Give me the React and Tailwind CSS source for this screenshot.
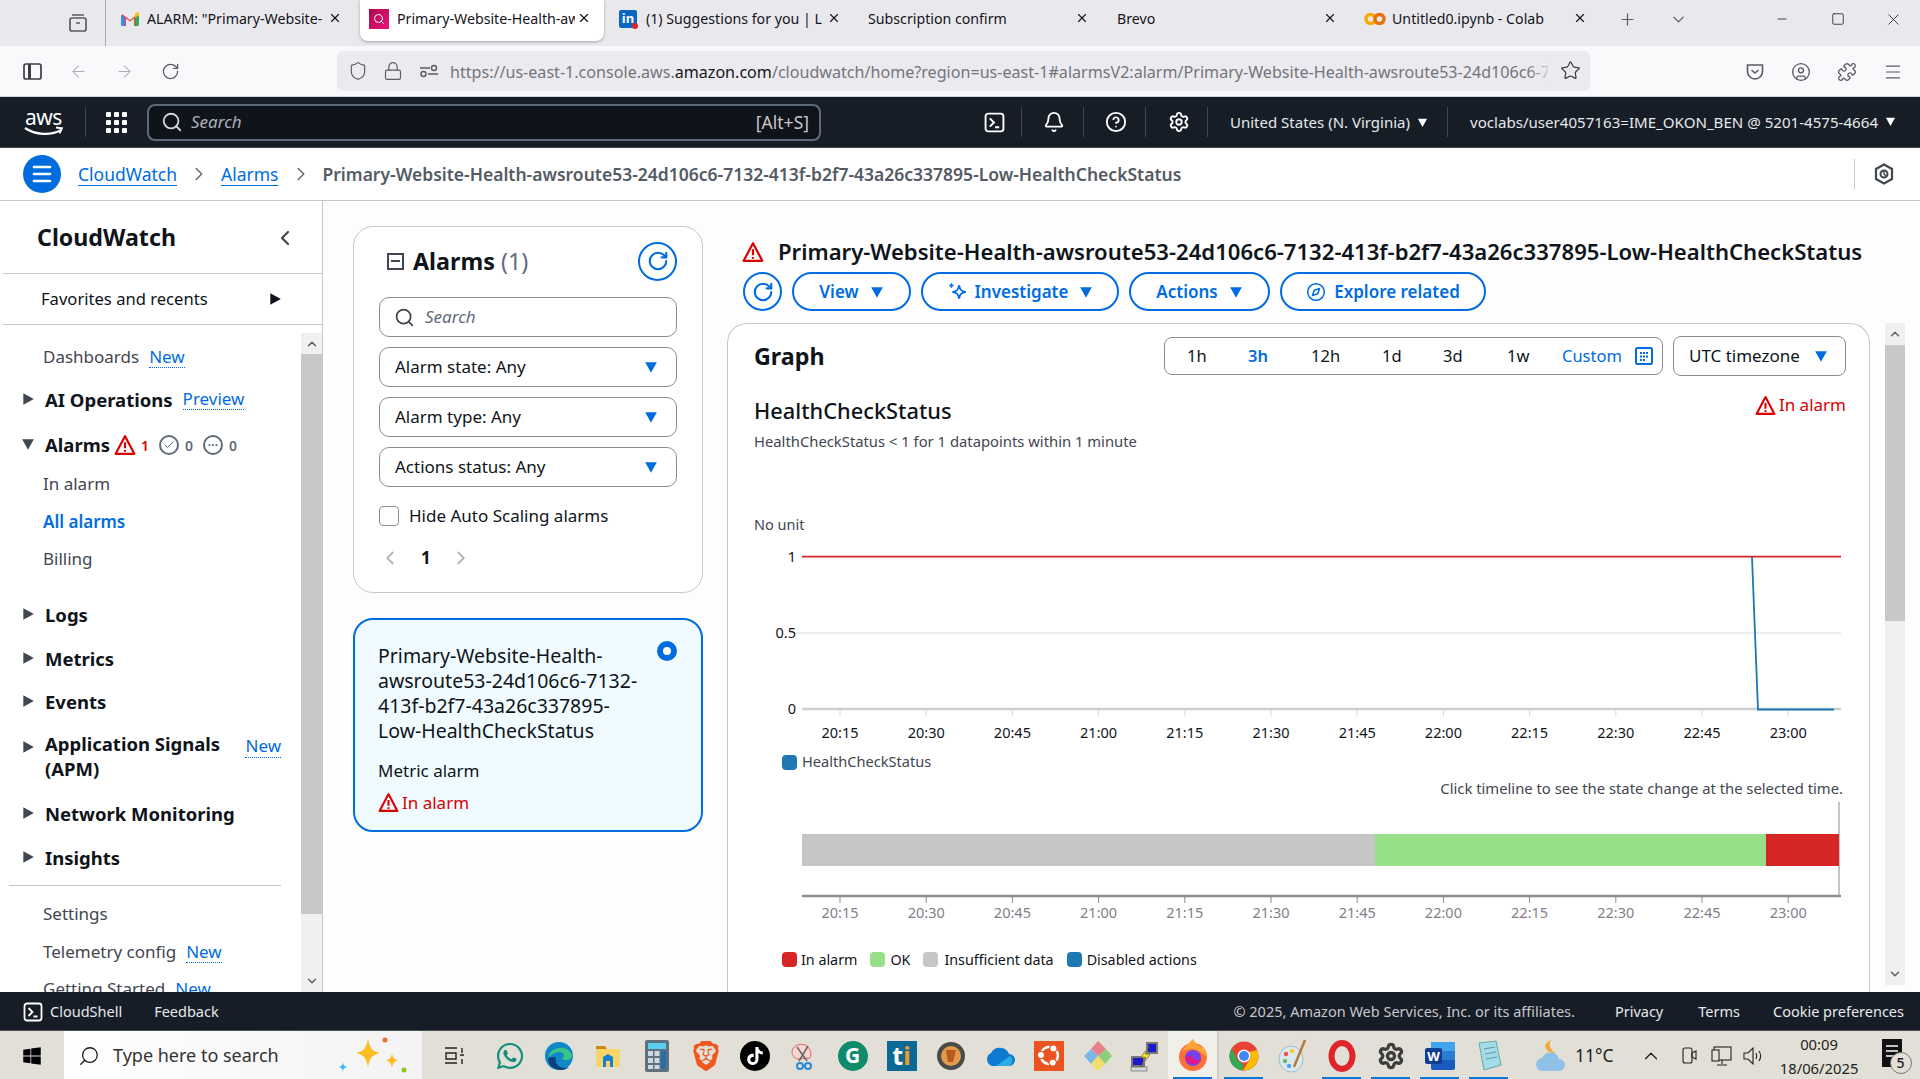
import React from "react";
import {
  ArrowLeft, ArrowRight, RotateCw, Shield, Lock, Star, CircleUser, Puzzle, Menu, Search, Bell, CircleHelp, Settings,
  Compass, ChevronRight, ChevronLeft, ChevronUp, ChevronDown, X, Plus, Minus, Square, Check, Ellipsis,
} from "lucide-react";
import { FaWhatsapp, FaWindows } from "react-icons/fa";
import { SiTiktok, SiBrave, SiUbuntu } from "react-icons/si";

const font = { fontFamily: '"Noto Sans", sans-serif' };

const Caret = ({ dir = "down", className = "", size = 12 }) => (
  <svg width={size} height={size} viewBox="0 0 12 12" className={`shrink-0 ${className}`} fill="currentColor">
    {dir === "down" ? <path d="M1 2h10L6 11z" /> : <path d="M2 1l9 5-9 5z" />}
  </svg>
);

const Warn = ({ size = 20, className = "" }) => (
  <svg width={size} height={size} viewBox="0 0 20 20" className={`shrink-0 ${className}`} fill="none" stroke="#db0000" strokeWidth="2" strokeLinejoin="round">
    <path d="M10 2 1.500 18h17z" />
    <path d="M10 7.500v5.500M10 14.500v1.600" strokeWidth="2" />
  </svg>
);

const Term = ({ size = 20, className = "" }) => (
  <svg width={size} height={size} viewBox="0 0 20 20" className={`shrink-0 ${className}`} fill="none" stroke="currentColor" strokeWidth="1.8">
    <rect x="1.500" y="1.500" width="17" height="17" rx="2.500" />
    <path d="M5.500 6l4 4-4 4M10.500 14.500h4" />
  </svg>
);

function Tab({ w, icon, iconW = 37, text, active, textW, close = 13 }) {
  return (
    <div className={`h-[41px] flex items-center relative shrink-0 pb-[4px] ${active ? "bg-white rounded-b-lg shadow-[0_1px_3px_rgba(0,0,0,0.3)]" : ""}`} style={{ width: w }}>
      <div className="flex justify-center shrink-0" style={{ width: iconW }}>{icon}</div>
      <span className="overflow-hidden whitespace-nowrap text-[14.2px] text-[#15141a]" style={{ width: textW }}>{text}</span>
      <X size={14} strokeWidth={2} className="absolute top-[11px] text-[#15141a]" style={{ right: close }} />
    </div>
  );
}

function TabBar() {
  return (
    <div className="h-[46px] bg-[#e9e9ed] flex items-start shrink-0">
      <div className="w-[106px] h-[46px] flex items-center border-r border-[#a8a8ad] shrink-0 pl-[68px]">
        <svg width="20" height="20" viewBox="0 0 20 20" fill="none" stroke="#5b5b66" strokeWidth="1.7"><rect x="2" y="5" width="16" height="13" rx="2"/><path d="M4 2h12M8 10h4"/></svg>
      </div>
      <Tab w={254} iconW={41} close={18} textW={176} text={'ALARM: "Primary-Website-Health'} icon={
        <svg width="18" height="14" viewBox="0 0 18 14" className="ml-[6px]"><path d="M1 14V2l8 6 8-6v12h-4V6.500L9 9.500 5 6.500V14z" fill="#ea4335"/><path d="M0 3v9.500A1.500 1.500 0 0 0 1.500 14H4V6z" fill="#4285f4"/><path d="M18 3v9.500a1.500 1.500 0 0 1-1.500 1.500H14V6z" fill="#34a853"/><path d="M14 2v4l4-3V1.500C18 .5 17 0 16 .5z" fill="#fbbc04"/></svg>
      } />
      <Tab w={244} textW={178} active text="Primary-Website-Health-awsroute53" icon={
        <div className="w-[20px] h-[20px] bg-gradient-to-br from-[#b0084d] to-[#e7157b] flex items-center justify-center">
          <Search size={12} className="text-white" />
        </div>
      } />
      <Tab w={248} iconW={42} close={11} textW={176} text="(1) Suggestions for you | LinkedIn" icon={
        <div className="relative w-[18px] h-[18px] bg-[#0a66c2] text-white text-[13px] font-bold flex items-center justify-center rounded-[2px] ml-[6px]">in<span className="absolute -right-[1px] -bottom-[1px] w-[6px] h-[6px] rounded-full bg-[#e0232c]" /></div>
      } />
      <div className="w-[248px] h-[41px] pb-[4px] flex items-center relative shrink-0 text-[14.2px] text-[#15141a] pl-[16px]">Subscription confirm<X size={14} strokeWidth={2} className="absolute right-[11px] top-[11px]" /></div>
      <div className="w-[249px] h-[41px] pb-[4px] flex items-center relative shrink-0 text-[14.2px] text-[#15141a] pl-[17px]">Brevo<X size={14} strokeWidth={2} className="absolute right-[12px] top-[11px]" /></div>
      <div className="w-[249px] h-[41px] pb-[4px] flex items-center relative shrink-0 text-[14.2px] text-[#15141a] pl-[15px]">
        <svg width="22" height="12" viewBox="0 0 22 12" fill="none" strokeWidth="3.400" className="mr-[6px]"><circle cx="6.500" cy="6" r="4.500" stroke="#f9ab00"/><circle cx="15.500" cy="6" r="4.500" stroke="#e8710a"/></svg>
        Untitled0.ipynb - Colab<X size={14} strokeWidth={2} className="absolute right-[11px] top-[11px]" />
      </div>
      <div className="flex items-center h-[38px] ml-[20px] gap-[32px] text-[#5b5b66]">
        <Plus size={19} strokeWidth={1.500} />
        <ChevronDown size={19} strokeWidth={1.500} />
      </div>
      <div className="flex items-center h-[38px] ml-auto text-[#15141a] pr-[-2px]">
        <div className="w-[57px] flex justify-center"><Minus size={14} strokeWidth={1.300} /></div>
        <div className="w-[56px] flex justify-center"><Square size={14} strokeWidth={1.300} /></div>
        <div className="w-[54px] flex justify-center"><X size={19} strokeWidth={1} /></div>
      </div>
    </div>
  );
}

function Toolbar() {
  return (
    <div className="h-[51px] bg-[#f9f9fb] flex items-center shrink-0 border-b border-[#d5d5da] text-[#5b5b66]">
      <div className="w-[337px] flex items-center pl-[23px] gap-[27px]">
        <svg width="19" height="17" viewBox="0 0 19 17" fill="none" stroke="#3e3e46" strokeWidth="1.700"><rect x="1" y="1" width="17" height="15" rx="2"/><path d="M6.500 1v15" strokeWidth="3" /></svg>
        <ArrowLeft size={19} strokeWidth={1.300} className="text-[#adadb3]" />
        <ArrowRight size={19} strokeWidth={1.300} className="text-[#adadb3]" />
        <RotateCw size={19} strokeWidth={1.600} />
      </div>
      <div className="w-[1253px] h-[40px] bg-[#ebebef] rounded-[6px] flex items-center pl-[11px] relative overflow-hidden">
        <Shield size={20} strokeWidth={1.400} className="shrink-0" />
        <Lock size={20} strokeWidth={1.400} className="shrink-0 ml-[15px]" />
        <svg width="20" height="16" viewBox="0 0 20 16" className="shrink-0 ml-[16px]" fill="none" stroke="currentColor" strokeWidth="1.400"><path d="M1 5h10M9 11h10"/><circle cx="15" cy="5" r="2.500"/><circle cx="4.500" cy="11" r="2.500"/></svg>
        <div className="ml-[11px] w-[1098px] h-[26px] leading-[26px] mt-[2px] overflow-hidden whitespace-nowrap text-[16.1px] text-[#74747b]">
          https://us-east-1.console.aws.<span className="text-[#15141a]">amazon.com</span>/cloudwatch/home?region=us-east-1#alarmsV2:alarm/Primary-Website-Health-awsroute53-24d106c6-7132
        </div>
        <div className="absolute left-[1190px] top-0 w-[28px] h-[40px] bg-gradient-to-r from-transparent to-[#ebebef]" />
        <Star size={21} strokeWidth={1.400} className="absolute right-[9px] top-[9px] text-[#3e3e46]" />
      </div>
      <div className="flex-1 flex items-center justify-end pr-[17px] gap-[26px] mt-[1px]">
        <svg width="20" height="20" viewBox="0 0 20 20" className="ml-[3px]" fill="none" stroke="currentColor" strokeWidth="1.600"><path d="M2.500 3h15v6.500a7.500 7.500 0 0 1-15 0z"/><path d="M6.500 8l3.500 3 3.500-3"/></svg>
        <CircleUser size={20} strokeWidth={1.600} />
        <Puzzle size={20} strokeWidth={1.600} />
        <Menu size={20} strokeWidth={1.400} />
      </div>
    </div>
  );
}

const NavSep = () => <div className="w-px h-[30px] bg-[#414750] shrink-0" />;

function AwsNav() {
  return (
    <div className="h-[51px] bg-[#161d26] flex items-center shrink-0 text-[#e6e9ec] relative border-b border-[#414750]">
      <div className="w-[85px] flex justify-center pl-[2px] shrink-0">
        <div className="relative w-[40px] h-[30px] flex justify-center">
          <span className="text-white text-[21px] leading-[20px] tracking-[-0.5px]">aws</span>
          <svg width="40" height="11" viewBox="0 0 40 11" className="absolute left-0 bottom-0" fill="none"><path d="M1 2c10 7 26 8 36 2" stroke="#fff" strokeWidth="2.200"/><path d="M32 1.500l6 .8-2.400 5" stroke="#fff" strokeWidth="1.800"/></svg>
        </div>
      </div>
      <div className="w-px h-[30px] bg-[#414750]" />
      <div className="w-[60px] flex justify-center shrink-0">
        <div className="grid grid-cols-3 gap-[3px]">
          {Array.from({ length: 9 }).map((_, i) => <span key={i} className="w-[5px] h-[5px] rounded-[1px] bg-white" />)}
        </div>
      </div>
      <div className="w-[674px] h-[37px] ml-[1px] border-2 border-[#5f6b7a] rounded-[8px] bg-[#0f141a] flex items-center pl-[12px] pr-[10px] shrink-0">
        <Search size={22} strokeWidth={2} className="text-[#d1d5db]" />
        <span className="italic text-[#aab0b8] text-[17px] ml-[8px]">Search</span>
        <span className="ml-auto text-[#c6c6cd] text-[17.5px]">[Alt+S]</span>
      </div>
      <div className="flex-1 flex items-center">
        <div className="w-[174px] shrink-0 relative h-[30px] flex items-center ml-[-1px]">
          <Term size={21} className="absolute left-[164px] text-white" />
        </div>
        <div className="ml-[27px] flex items-center">
          <NavSep />
          <div className="w-[61px] flex justify-center pl-[2px]"><Bell size={22} strokeWidth={2} className="text-white" /></div>
          <NavSep />
          <div className="w-[61px] flex justify-center pl-[2px]"><CircleHelp size={22} strokeWidth={2} className="text-white" /></div>
          <NavSep />
          <div className="w-[61px] flex justify-center pl-[4px]"><Settings size={22} strokeWidth={2} className="text-white" /></div>
          <NavSep />
          <div className="w-[239px] flex items-center pl-[22px] text-[15px] whitespace-nowrap">United States (N. Virginia)<Caret size={11} className="ml-[7px] text-white" /></div>
          <NavSep />
          <div className="flex items-center pl-[22px] text-[15.100px] whitespace-nowrap">voclabs/user4057163=IME_OKON_BEN @ 5201-4575-4664<Caret size={11} className="ml-[7px] text-white" /></div>
        </div>
      </div>
    </div>
  );
}

function Breadcrumb() {
  return (
    <div className="h-[53px] bg-white border-b border-[#c6c6cd] flex items-center shrink-0 pl-[23px] text-[17.500px]">
      <div className="w-[38px] h-[38px] rounded-full bg-[#006ce0] flex items-center justify-center shrink-0">
        <Menu size={24} strokeWidth={2.600} className="text-white" />
      </div>
      <a className="ml-[17px] text-[#006ce0] underline underline-offset-[4px]">CloudWatch</a>
      <ChevronRight size={22} strokeWidth={1.600} className="mx-[11px] text-[#656871]" />
      <a className="text-[#006ce0] underline underline-offset-[4px]">Alarms</a>
      <ChevronRight size={22} strokeWidth={1.600} className="mx-[11px] text-[#656871]" />
      <span className="font-semibold text-[#545b64] whitespace-nowrap">Primary-Website-Health-awsroute53-24d106c6-7132-413f-b2f7-43a26c337895-Low-HealthCheckStatus</span>
      <div className="ml-auto w-[65px] h-[30px] border-l border-[#c6c6cd] flex items-center pl-[19px] mr-[1px]">
        <svg width="20" height="22" viewBox="0 0 20 22" fill="none" stroke="#414750" strokeWidth="2.200"><path d="M10 1.500 18 6v10l-8 4.500L2 16V6z"/><circle cx="10" cy="11" r="3.500" strokeWidth="2"/><path d="M10 8v3l2 2" strokeWidth="1.400"/></svg>
      </div>
    </div>
  );
}

const NewTag = ({ children = "New", className = "" }) => (
  <span className={`text-[#006ce0] border-b border-dotted border-[#006ce0] leading-[21px] text-[17px] ${className}`}>{children}</span>
);

const Group = ({ label, mt, h = "h-[36px]", extra }) => (
  <div className={`flex items-center ${h} ${mt} relative pl-[45px] pr-[2px]`}>
    <Caret dir="right" size={14} className="absolute left-[21px] top-[11px] text-[#414750]" />
    <span className="font-bold text-[18.500px] leading-[25px] text-[#0f141a] whitespace-nowrap">{label}</span>
    {extra}
  </div>
);

const Item = ({ label, mt, color = "text-[#424650]", tag, bold }) => (
  <div className={`flex items-center h-[36px] ${mt} pl-[43px] text-[17px] ${color} ${bold ? "font-semibold" : ""} whitespace-nowrap`}>
    {label}{tag && <NewTag className="ml-[10px]">{tag}</NewTag>}
  </div>
);

function Sidebar() {
  return (
    <div className="w-[323px] bg-white border-r border-[#c6c6cd] shrink-0 flex flex-col h-[791px] overflow-hidden">
      <div className="h-[73px] border-b border-[#c6c6cd] ml-[3px] flex items-center relative shrink-0">
        <span className="ml-[34px] text-[23.200px] font-bold text-[#0f141a]">CloudWatch</span>
        <ChevronLeft size={24} strokeWidth={2.200} className="absolute left-[270px] top-[25px] text-[#424650]" />
      </div>
      <div className="h-[51px] border-b border-[#c6c6cd] ml-[3px] flex items-center relative shrink-0">
        <span className="ml-[38px] text-[16.600px] text-[#0f141a]">Favorites and recents</span>
        <Caret dir="right" size={14} className="absolute left-[265px] top-[18px] text-[#0f141a]" />
      </div>
      <div className="flex flex-1 overflow-hidden">
        <div className="w-[301px] overflow-hidden shrink-0">
          <Item label="Dashboards" mt="mt-[14px]" tag="New" />
          <Group label="AI Operations" mt="mt-[6px]" extra={<NewTag className="ml-[10px]">Preview</NewTag>} />
          <div className="flex items-center h-[36px] mt-[10px] relative pl-[45px]">
            <Caret dir="down" size={14} className="absolute left-[21px] top-[10px] text-[#414750]" />
            <span className="font-bold text-[18.500px] text-[#0f141a]">Alarms</span>
            <Warn size={22} className="ml-[4px]" />
            <span className="ml-[5px] text-[14px] font-semibold text-[#db0000]">1</span>
            <span className="ml-[10px] w-[20px] h-[20px] rounded-full border-2 border-[#5f6b7a] flex items-center justify-center"><Check size={12} strokeWidth={2} className="text-[#5f6b7a]" /></span>
            <span className="ml-[6px] text-[14px] font-semibold text-[#5f6b7a]">0</span>
            <span className="ml-[10px] w-[20px] h-[20px] rounded-full border-2 border-[#5f6b7a] flex items-center justify-center"><Ellipsis size={12} strokeWidth={2.500} className="text-[#5f6b7a]" /></span>
            <span className="ml-[6px] text-[14px] font-semibold text-[#5f6b7a]">0</span>
          </div>
          <Item label="In alarm" mt="mt-[3px]" />
          <Item label="All alarms" mt="mt-[2px]" color="text-[#006ce0]" bold />
          <Item label="Billing" mt="mt-[1px]" />
          <Group label="Logs" mt="mt-[19px]" />
          <Group label="Metrics" mt="mt-[8px]" />
          <Group label="Events" mt="mt-[7px]" />
          <div className="flex h-[58px] mt-[12px] relative pl-[45px] pr-[20px]">
            <Caret dir="right" size={14} className="absolute left-[21px] top-[9px] text-[#414750]" />
            <span className="font-bold text-[18.500px] leading-[25px] text-[#0f141a] w-[200px]">Application Signals (APM)</span>
            <div className="ml-auto h-[24px] mt-[3px]"><NewTag>New</NewTag></div>
          </div>
          <Group label="Network Monitoring" mt="mt-[6px]" />
          <Group label="Insights" mt="mt-[8px]" />
          <div className="h-px bg-[#c6c6cd] ml-[9px] mr-[20px] mt-[10px]" />
          <Item label="Settings" mt="mt-[10px]" />
          <Item label="Telemetry config" mt="mt-[2px]" tag="New" />
          <Item label="Getting Started" mt="mt-[1px]" tag="New" />
        </div>
        <div className="w-[21px] shrink-0 flex flex-col mt-[8px] bg-[#f0f0f0] mr-[-2px]">
          <div className="h-[21px] flex items-center justify-center"><ChevronUp size={14} strokeWidth={2.600} className="text-[#606060]" /></div>
          <div className="h-[560px] bg-[#c8c8c8]" />
          <div className="flex-1 flex items-end justify-center pb-[4px]"><ChevronDown size={14} strokeWidth={2.600} className="text-[#606060]" /></div>
        </div>
      </div>
    </div>
  );
}

const SelectBox = ({ label }) => (
  <div className="h-[40px] mt-[10px] border border-[#8c8c94] rounded-[10px] flex items-center pl-[15px] pr-[18px] text-[17px] text-[#0f141a]">
    {label}<Caret size={14} className="ml-auto text-[#006ce0]" />
  </div>
);

function AlarmList() {
  return (
    <div className="w-[350px] shrink-0 ml-[30px] mt-[25px]">
      <div className="h-[367px] border border-[#c6c6cd] rounded-[20px] bg-white px-[25px] pt-[15px]">
        <div className="flex items-center h-[38px]">
          <span className="w-[17px] h-[17px] ml-[8px] border-2 border-[#424650] flex items-center justify-center"><span className="w-[9px] h-[2px] bg-[#424650]" /></span>
          <span className="ml-[9px] text-[23.300px] font-bold text-[#0f141a]">Alarms <span className="font-normal text-[#5f6b7a]">(1)</span></span>
          <span className="ml-auto w-[39px] h-[39px] rounded-full border-2 border-[#006ce0] flex items-center justify-center"><RotateCw size={22} strokeWidth={2.300} className="text-[#006ce0]" /></span>
        </div>
        <div className="h-[40px] mt-[17px] border border-[#8c8c94] rounded-[10px] flex items-center pl-[14px] text-[#5f6b7a]">
          <Search size={21} strokeWidth={2} className="text-[#424650]" />
          <span className="ml-[10px] italic text-[17px]">Search</span>
        </div>
        <SelectBox label="Alarm state: Any" />
        <SelectBox label="Alarm type: Any" />
        <SelectBox label="Actions status: Any" />
        <div className="flex items-center mt-[19px] h-[20px]">
          <span className="w-[20px] h-[20px] rounded-[4px] border border-[#8c8c94] shrink-0" />
          <span className="ml-[10px] text-[17px] text-[#0f141a]">Hide Auto Scaling alarms</span>
        </div>
        <div className="flex items-center mt-[22px] h-[20px]">
          <ChevronLeft size={22} strokeWidth={2} className="text-[#b4b4bb]" />
          <span className="ml-[20px] font-bold text-[17px] text-[#0f141a]">1</span>
          <ChevronRight size={22} strokeWidth={2} className="ml-[19px] text-[#b4b4bb]" />
        </div>
      </div>
      <div className="h-[214px] mt-[25px] border-2 border-[#006ce0] rounded-[20px] bg-[#f0fbff] relative pl-[23px] pt-[23px] text-[19.500px] text-[#0f141a]">
        <div className="w-[290px] leading-[25px] whitespace-nowrap">Primary-Website-Health-<br />awsroute53-24d106c6-7132-<br />413f-b2f7-43a26c337895-<br />Low-HealthCheckStatus</div>
        <div className="mt-[15px] text-[17px]">Metric alarm</div>
        <div className="mt-[6px] flex items-center text-[17px] text-[#db0000]"><Warn size={21} className="mr-[3px]" />In alarm</div>
        <span className="absolute right-[24px] top-[21px] w-[20px] h-[20px] rounded-full border-[6px] border-[#006ce0] bg-white" />
      </div>
    </div>
  );
}

const Btn = ({ children, w }) => (
  <div className={`h-[39px] ${w} rounded-[20px] border-2 border-[#006ce0] bg-white flex items-center justify-center text-[#006ce0] font-semibold text-[17px] shrink-0 whitespace-nowrap pt-[1px]`}>{children}</div>
);

const Swatch = ({ c, className = "" }) => <span className={`w-[15px] h-[15px] rounded-[4px] shrink-0 ${className}`} style={{ background: c }} />;

const ticks = ["20:15","20:30","20:45","21:00","21:15","21:30","21:45","22:00","22:15","22:30","22:45","23:00"];

function Chart() {
  const tx = (i) => 86 + i * 86.2;
  return (
    <svg width="1092" height="384" className="block" style={font}>
      <text x="42" y="22.500" textAnchor="end" fontSize="14.500" fill="#0f141a">1</text>
      <text x="42" y="99" textAnchor="end" fontSize="14.500" fill="#0f141a">0.5</text>
      <text x="42" y="175" textAnchor="end" fontSize="14.500" fill="#0f141a">0</text>
      <line x1="42" x2="1087" y1="94" y2="94" stroke="#e9e9ec" strokeWidth="1.500" />
      <line x1="48" x2="1087" y1="170" y2="170" stroke="#cfcfd3" strokeWidth="2.500" />
      {ticks.map((t, i) => (
        <g key={t}>
          <line x1={tx(i)} x2={tx(i)} y1="171" y2="177" stroke="#d8d8dc" />
          <text x={tx(i)} y="199" textAnchor="middle" fontSize="14.500" fill="#0f141a">{t}</text>
        </g>
      ))}
      <line x1="48" x2="1087" y1="17.700" y2="17.700" stroke="#d62626" strokeWidth="1.800" />
      <polyline points="998,18 1004,170.500 1080,170.500" fill="none" stroke="#1f77b4" strokeWidth="1.800" />
      <line x1="1085" x2="1085" y1="263" y2="356" stroke="#8c8c94" />
      <rect x="48" y="295" width="573" height="32" fill="#c6c6c6" />
      <rect x="621" y="295" width="391" height="32" fill="#98e088" />
      <rect x="1012" y="295" width="73" height="32" fill="#d62626" />
      <line x1="48" x2="1087" y1="357" y2="357" stroke="#8c8c94" strokeWidth="2.500" />
      {ticks.map((t, i) => (
        <g key={"b" + t}>
          <line x1={tx(i)} x2={tx(i)} y1="358" y2="364" stroke="#8c8c94" />
          <text x={tx(i)} y="379" textAnchor="middle" fontSize="14.500" fill="#7f7f87">{t}</text>
        </g>
      ))}
    </svg>
  );
}

function GraphPanel() {
  return (
    <div className="flex-1 mt-[12px] relative">
      <div className="ml-[-2px] w-[1143px] h-[680px] border border-[#c6c6cd] border-b-0 rounded-t-[20px] bg-white pl-[26px] pr-[23px] pt-[12px] relative overflow-hidden">
        <div className="flex items-center">
          <span className="text-[23.300px] font-bold text-[#0f141a] mt-[1px]">Graph</span>
          <div className="ml-auto w-[499px] h-[38px] border border-[#8c8c94] rounded-[8px] flex items-center text-[16.500px] text-[#0f141a] relative">
            <span className="absolute left-[22px]">1h</span>
            <span className="absolute left-[83px] font-semibold text-[#006ce0]">3h</span>
            <span className="absolute left-[146px]">12h</span>
            <span className="absolute left-[217px]">1d</span>
            <span className="absolute left-[278px]">3d</span>
            <span className="absolute left-[342px]">1w</span>
            <span className="absolute left-[397px] text-[#006ce0]">Custom</span>
            <svg width="18" height="18" viewBox="0 0 18 18" className="absolute left-[470px]" fill="none" stroke="#006ce0" strokeWidth="2"><rect x="1" y="1" width="16" height="16" rx="1.500"/><path d="M5 6h2M8 6h2M11 6h2M5 9.500h2M8 9.500h2M11 9.500h2M5 13h2M8 13h2" strokeWidth="1.800"/></svg>
          </div>
          <div className="ml-[10px] w-[173px] h-[40px] border border-[#8c8c94] rounded-[8px] flex items-center pl-[15px] pr-[17px] text-[17px] text-[#0f141a]">
            UTC timezone<Caret size={14} className="ml-auto text-[#006ce0]" />
          </div>
        </div>
        <div className="flex justify-between mt-[17px]">
          <div>
            <div className="text-[21.800px] font-medium text-[#0f141a] leading-[28px] mt-[4px]">HealthCheckStatus</div>
            <div className="text-[14.800px] text-[#424650] mt-[5px]">HealthCheckStatus &lt; 1 for 1 datapoints within 1 minute</div>
          </div>
          <div className="flex items-center h-[24px] text-[#db0000] text-[17px]"><Warn size={21} className="mr-[3px]" />In alarm</div>
        </div>
        <div className="text-[14.500px] text-[#424650] mt-[62px] leading-[20px]">No unit</div>
        <div className="mt-[5px] relative">
          <Chart />
          <div className="absolute left-[28px] top-[212px] flex items-center text-[14.600px] text-[#424650]"><Swatch c="#1f77b4" className="mr-[5px]" />HealthCheckStatus</div>
          <div className="absolute right-[3px] top-[238px] text-[14.800px] text-[#424650]">Click timeline to see the state change at the selected time.</div>
          <div className="absolute left-[28px] top-[410px] flex items-center text-[14.300px] text-[#0f141a]">
            <Swatch c="#d62626" className="mr-[4px]" />In alarm
            <Swatch c="#98e088" className="ml-[13px] mr-[5px]" />OK
            <Swatch c="#c6c6c6" className="ml-[13px] mr-[6px]" />Insufficient data
            <Swatch c="#1f77b4" className="ml-[13px] mr-[5px]" />Disabled actions
          </div>
        </div>
      </div>
    </div>
  );
}

function Detail() {
  return (
    <div className="flex-1 min-w-0 ml-[26px] flex">
      <div className="w-[1143px] shrink-0 flex flex-col">
        <div className="ml-[13px] mt-[37px] flex items-center h-[28px]">
          <Warn size={22} />
          <span className="ml-[14px] text-[22.100px] font-semibold text-[#0f141a] whitespace-nowrap">Primary-Website-Health-awsroute53-24d106c6-7132-413f-b2f7-43a26c337895-Low-HealthCheckStatus</span>
        </div>
        <div className="ml-[14px] mt-[6px] flex gap-[10px] items-center">
          <span className="w-[39px] h-[39px] rounded-full border-2 border-[#006ce0] bg-white flex items-center justify-center shrink-0"><RotateCw size={22} strokeWidth={2.300} className="text-[#006ce0]" /></span>
          <Btn w="w-[119px]">View<Caret size={14} className="ml-[11px]" /></Btn>
          <Btn w="w-[198px]">
            <svg width="22" height="24" viewBox="0 0 20 22" className="mr-[6px]" fill="none" stroke="currentColor" strokeWidth="1.800"><path d="M11 5c.6 4 2 5.400 6 6-4 .6-5.400 2-6 6-.6-4-2-5.400-6-6 4-.6 5.400-2 6-6z"/><path d="M4 3v4M2 5h4" strokeWidth="1.400"/></svg>
            Investigate<Caret size={14} className="ml-[11px]" /></Btn>
          <Btn w="w-[141px]">Actions<Caret size={14} className="ml-[11px]" /></Btn>
          <Btn w="w-[206px]"><Compass size={20} strokeWidth={1.800} className="mr-[8px]" />Explore related</Btn>
        </div>
        <GraphPanel />
      </div>
      <div className="w-[20px] ml-[13px] mt-[122px] mb-[7px] bg-[#f0f0f0] flex flex-col shrink-0">
        <div className="h-[22px] flex items-center justify-center"><ChevronUp size={14} strokeWidth={2.600} className="text-[#606060]" /></div>
        <div className="h-[276px] bg-[#c8c8c8]" />
        <div className="flex-1 flex items-end justify-center pb-[4px]"><ChevronDown size={14} strokeWidth={2.600} className="text-[#606060]" /></div>
      </div>
    </div>
  );
}

function Footer() {
  return (
    <div className="h-[39px] bg-[#161d26] flex items-center shrink-0 text-[14.500px] text-[#e6e9ec] pl-[23px] pt-[1px] border-b border-[#4b5059]">
      <Term size={20} className="text-white" />
      <span className="ml-[7px]">CloudShell</span>
      <span className="ml-[32px]">Feedback</span>
      <span className="ml-auto text-[#c6c6cd]">© 2025, Amazon Web Services, Inc. or its affiliates.</span>
      <span className="ml-[40px]">Privacy</span>
      <span className="ml-[35px]">Terms</span>
      <span className="ml-[33px] mr-[16px]">Cookie preferences</span>
    </div>
  );
}

const Cell = ({ children, on, hi, w = "w-[49px]" }) => (
  <div className={`${w} h-[49px] flex items-center justify-center relative shrink-0 ${hi ? "bg-[#f0efe9]" : ""}`}>
    {children}
    {on && <span className="absolute bottom-0 left-[5px] right-[5px] h-[3px] bg-[#0a78d4]" />}
  </div>
);

function Taskbar() {
  return (
    <div className="h-[49px] bg-[#e2e0d6] flex items-center shrink-0 overflow-hidden text-[#1a1a1a]">
      <div className="w-[64px] flex justify-center shrink-0"><FaWindows size={20} className="text-black" /></div>
      <div className="w-[358px] h-[49px] bg-gradient-to-r from-white to-[#f3f3f3] flex items-center pl-[14px] relative shrink-0">
        <Search size={22} strokeWidth={1.400} className="-scale-x-100" />
        <span className="ml-[13px] text-[18px] text-[#333]">Type here to search</span>
        <svg width="78" height="44" viewBox="0 0 78 44" className="absolute left-[270px] top-[2px]">
          <path d="M34 5c1.500 10 4 13 12 15-8 2-10.500 5-12 15-1.500-10-4-13-12-15 8-2 10.500-5 12-15z" fill="#fbbf24"/>
          <path d="M58 20c.8 5 2 6 6 7.500-4 1.500-5.200 2.500-6 7.500-.8-5-2-6-6-7.500 4-1.500 5.200-2.500 6-7.500z" fill="#fbbf24"/>
          <path d="M9 29c.4 3 1 4 4 5-3 1-3.600 2-4 5-.4-3-1-4-4-5 3-1 3.600-2 4-5z" fill="#38bdf8"/>
          <circle cx="51" cy="7" r="2.500" fill="#ef6a3a"/><circle cx="70" cy="37" r="2.500" fill="#84cc16"/>
        </svg>
      </div>
      <div className="w-[63px] flex justify-center shrink-0">
        <svg width="24" height="24" viewBox="0 0 24 24" fill="none" stroke="#222" strokeWidth="1.400"><path d="M3 4h12M3 19h12M4 9h10v6H4zM20 4v5M20 15v5M18 11h4"/></svg>
      </div>
      <Cell><FaWhatsapp size={30} className="text-[#128c7e]" /></Cell>
      <Cell>
        <svg width="30" height="30" viewBox="0 0 30 30"><circle cx="15" cy="15" r="14" fill="#0f87c9"/><path d="M4 17C6 5 24 3 28 14c1 5-8 7-10 3 3-1 3-6-3-6-6 0-11 6-11 6z" fill="#39c485"/><path d="M4 17c0 7 6 12 13 12 3 0 6-1 8-3-8 3-15-2-13-10-3 0-6 0-8 1z" fill="#0c3e78"/></svg>
      </Cell>
      <Cell>
        <svg width="28" height="28" viewBox="0 0 28 28"><path d="M2 4h9l2 3H2z" fill="#c98b16"/><rect x="2" y="7" width="24" height="18" fill="#f6d56a"/><path d="M9 25V15l5-3 5 3v10h-3v-6h-4v6z" fill="#1a7fd1"/></svg>
      </Cell>
      <Cell>
        <svg width="24" height="32" viewBox="0 0 24 32"><rect width="24" height="32" rx="2" fill="#5f7180"/><rect x="3" y="3" width="18" height="6" fill="#5ad0ef"/><g fill="#cfd8dc"><rect x="3" y="11" width="5" height="5"/><rect x="9.500" y="11" width="5" height="5"/><rect x="3" y="18" width="5" height="5"/><rect x="9.500" y="18" width="5" height="5"/><rect x="3" y="25" width="5" height="4"/><rect x="9.500" y="25" width="5" height="4"/></g><rect x="16" y="11" width="5" height="18" fill="#2a6ea8"/></svg>
      </Cell>
      <Cell><SiBrave size={30} className="text-[#f0561d]" /></Cell>
      <Cell><span className="w-[30px] h-[30px] rounded-full bg-black flex items-center justify-center"><SiTiktok size={18} className="text-white" /></span></Cell>
      <Cell>
        <svg width="30" height="30" viewBox="0 0 30 30" fill="none"><path d="M3 11C3 5 10 2 16 4c6 3 7 9 5 13L9 18C5 17 3 15 3 11z" fill="#f8d6d0" stroke="#d66"/><path d="M8 6l10 14M19 5l-9 15" stroke="#666" strokeWidth="1.500"/><circle cx="19" cy="25" r="3" stroke="#2a8bd4" strokeWidth="2"/><circle cx="11" cy="25" r="3" stroke="#2a8bd4" strokeWidth="2"/></svg>
      </Cell>
      <Cell><span className="w-[30px] h-[30px] rounded-full bg-[#0f8a6b] flex items-center justify-center text-white font-bold text-[21px]">G</span></Cell>
      <Cell><span className="w-[30px] h-[30px] bg-[#0b6a95] flex items-center justify-center font-bold text-[25px]"><span className="text-white">t</span><span className="text-[#f39a2c]">i</span></span></Cell>
      <Cell>
        <svg width="30" height="30" viewBox="0 0 30 30"><circle cx="15" cy="15" r="14" fill="#4a4a4a"/><circle cx="15" cy="15" r="10" fill="#e19a4b"/><path d="M10 9h10l-3 12h-5z" fill="#b65a1f"/></svg>
      </Cell>
      <Cell>
        <svg width="32" height="22" viewBox="0 0 32 22"><path d="M8 21A7 7 0 0 1 7 8a10 10 0 0 1 18 1 6 6 0 0 1 0 12z" fill="#0f7ad1"/><path d="M12 21l14-10a6 6 0 0 1-1 10z" fill="#29aee6"/></svg>
      </Cell>
      <Cell><span className="w-[30px] h-[30px] bg-[#e95420] flex items-center justify-center"><SiUbuntu size={21} className="text-white" /></span></Cell>
      <Cell>
        <svg width="30" height="32" viewBox="0 0 30 32"><path d="M15 1 23 9 15 16 8 9z" fill="#e9808c"/><path d="M8 9l7 7-7 8L1 16z" fill="#7db7e8"/><path d="M23 9l6 7-7 8-7-8z" fill="#8dcc7a"/><path d="M15 16l7 8-7 7-7-7z" fill="#f5dc6e"/></svg>
      </Cell>
      <Cell w="w-[46px]">
        <svg width="30" height="32" viewBox="0 0 30 32"><rect x="16" y="2" width="12" height="12" fill="#777"/><rect x="18" y="4" width="8" height="8" fill="#1a1ac8"/><rect x="1" y="16" width="14" height="11" fill="#777"/><rect x="3" y="18" width="10" height="7" fill="#1a1ac8"/><rect x="1" y="27" width="16" height="4" fill="#d8d8d8" stroke="#555" strokeWidth=".6"/><path d="M19 6 11 17l5 .500-5 9 9-12-5-.500z" fill="#ffe11a" stroke="#555" strokeWidth=".6"/></svg>
      </Cell>
      <Cell hi on>
        <svg width="30" height="34" viewBox="0 0 30 34"><circle cx="15" cy="18" r="14" fill="#ff7139"/><path d="M15 0c2 4 6 8 11 9l3 9C20 8 6 8 4 14 6 8 10 5 15 0z" fill="#ffa436"/><circle cx="15" cy="19" r="8" fill="#7542e5"/><path d="M7 18c2 8 12 10 17 2-4 2-9 2-10-3z" fill="#e31587"/></svg>
      </Cell>
      <div className="w-[2px] h-[49px] bg-[#cfcdc3] shrink-0" />
      <Cell on>
        <svg width="30" height="30" viewBox="0 0 30 30"><circle cx="15" cy="15" r="14.500" fill="#ea4335"/><path d="M28 9a14.500 14.500 0 0 1-14 20.500L21 18a7 7 0 0 0-1-7z" fill="#fbbc04"/><path d="M2.500 7.500 9 19a7 7 0 0 0 5.500 3.500l-1 7A14.500 14.500 0 0 1 2.500 7.500z" fill="#34a853"/><circle cx="15" cy="15" r="6.500" fill="#fff"/><circle cx="15" cy="15" r="5" fill="#4285f4"/></svg>
      </Cell>
      <Cell>
        <svg width="32" height="34" viewBox="0 0 32 34"><ellipse cx="14" cy="20" rx="12" ry="13" fill="#dbe9ee" stroke="#a3bcc8"/><circle cx="9" cy="15" r="2.200" fill="#ef5350"/><circle cx="15" cy="12" r="2.200" fill="#ffca28"/><circle cx="8" cy="22" r="2.200" fill="#66bb6a"/><circle cx="12" cy="27" r="2.200" fill="#42a5f5"/><path d="M28 1 17 28" stroke="#b77a3a" strokeWidth="2.500"/></svg>
      </Cell>
      <Cell on>
        <svg width="30" height="32" viewBox="0 0 30 32" fill="none"><ellipse cx="15" cy="16" rx="10.500" ry="13" stroke="#e0242c" strokeWidth="6"/></svg>
      </Cell>
      <Cell on><Settings size={28} strokeWidth={2.800} className="text-[#3d3d3d]" /></Cell>
      <Cell on>
        <svg width="32" height="30" viewBox="0 0 32 30"><rect x="7" y="1" width="24" height="28" rx="2" fill="#185abd"/><rect x="7" y="1" width="24" height="9" fill="#41a5ee"/><rect x="7" y="10" width="24" height="9" fill="#2b7cd3"/><rect x="1" y="7" width="17" height="16" rx="2" fill="#103f91"/><text x="9.500" y="19.500" textAnchor="middle" fontSize="13" fontWeight="700" fill="#fff" style={font}>W</text></svg>
      </Cell>
      <Cell on>
        <svg width="30" height="32" viewBox="0 0 30 32"><path d="M5 3 22 1l5 24-17 5z" fill="#a3dbe8" stroke="#6aa"/><path d="M10 9l11-2M11 14l11-2M12 19l11-2" stroke="#5c9aaa"/></svg>
      </Cell>
      <svg width="32" height="36" viewBox="0 0 32 36" className="ml-[22px] shrink-0"><path d="M16 2a9 9 0 0 0 5 13A9 9 0 0 1 10 8a9 9 0 0 1 6-6z" fill="#f3a83a"/><path d="M8 33a6.500 6.500 0 0 1-1-13 9 9 0 0 1 17 1 6 6 0 0 1 0 12z" fill="#8fc0e8"/></svg>
      <span className="ml-[8px] text-[17.500px] text-[#222]">11°C</span>
      <ChevronUp size={22} strokeWidth={1.300} className="ml-[26px]" />
      <svg width="18" height="22" viewBox="0 0 18 22" className="ml-[18px]" fill="none" stroke="#222" strokeWidth="1.100"><rect x="3" y="3" width="9" height="15" rx="2" /><path d="M12 8l4-2v8l-4-2z"/></svg>
      <svg width="22" height="22" viewBox="0 0 22 22" className="ml-[13px]" fill="none" stroke="#222" strokeWidth="1.100"><rect x="3" y="2" width="17" height="13"/><rect x="1" y="5" width="7" height="11" fill="#e2e0d6"/><path d="M11 15v4M6 20h10"/></svg>
      <svg width="22" height="22" viewBox="0 0 22 22" className="ml-[8px]" fill="none" stroke="#222" strokeWidth="1.100"><path d="M3 8h4l5-5v16l-5-5H3zM15 8c1 2 1 4 0 6M18 6c2 3 2 7 0 10"/></svg>
      <div className="ml-[14px] w-[85px] text-center text-[14.800px] leading-[24px] text-[#222] shrink-0">00:09<br />18/06/2025</div>
      <div className="relative ml-[19px] w-[30px] h-[40px] shrink-0">
        <svg width="22" height="32" viewBox="0 0 22 32" className="absolute left-0 top-[2px]"><path d="M1 1h20v28H1z" fill="#111"/><path d="M5 8h12M5 13h12M5 18h8" stroke="#fff" strokeWidth="1.600"/></svg>
        <span className="absolute left-[9px] top-[16px] w-[22px] h-[22px] rounded-full bg-[#e2e0d6] border border-[#777] flex items-center justify-center text-[14px] font-medium">5</span>
      </div>
    </div>
  );
}

export default function App() {
  return (
    <div className="w-[1920px] h-[1079px] overflow-hidden flex flex-col bg-[#fdfdfd]" style={font}>
      <TabBar />
      <Toolbar />
      <AwsNav />
      <Breadcrumb />
      <div className="flex h-[791px] overflow-hidden shrink-0">
        <Sidebar />
        <AlarmList />
        <Detail />
      </div>
      <Footer />
      <Taskbar />
    </div>
  );
}
